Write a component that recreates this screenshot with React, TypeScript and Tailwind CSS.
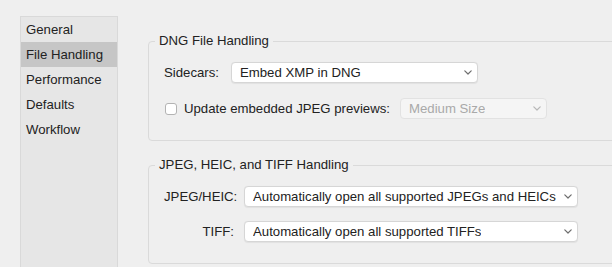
import type { ReactNode } from 'react'

const navItems = ['General', 'File Handling', 'Performance', 'Defaults', 'Workflow']

function Chevron({ disabled = false }: { disabled?: boolean }) {
  return (
    <svg width="8" height="5" viewBox="0 0 8 5" className="shrink-0">
      <path
        d="M0.8 0.8 L4 4 L7.2 0.8"
        fill="none"
        stroke={disabled ? '#b8b8b8' : '#6e6e6e'}
        strokeWidth="1.2"
        strokeLinecap="round"
        strokeLinejoin="round"
      />
    </svg>
  )
}

function Select({ value, width, disabled = false }: { value: string; width: string; disabled?: boolean }) {
  return (
    <div
      className={`flex h-[21px] shrink-0 items-center justify-between rounded-[4px] border pl-[8px] pr-[5px] ${width} ${
        disabled
          ? 'border-[#e2e2e2] bg-[#f5f5f5] text-[#a9a9a9]'
          : 'border-[#d6d6d6] bg-white text-[#222] shadow-[0_0.5px_1px_rgba(0,0,0,0.06)]'
      }`}
    >
      <span className="truncate">{value}</span>
      <Chevron disabled={disabled} />
    </div>
  )
}

function Group({ title, children }: { title: string; children: ReactNode }) {
  return (
    <div className="relative w-[480px] rounded-[4px] border border-[#dadada] pt-[20px] pb-[21px] pl-[15px]">
      <span className="absolute -top-[9px] left-[6px] bg-[#efefef] px-[4px] leading-4 text-[#222]">{title}</span>
      {children}
    </div>
  )
}

export default function App() {
  return (
    <div
      className="flex h-[267px] w-[612px] overflow-hidden bg-[#efefef] text-[13.2px] leading-4 text-[#222]"
      style={{ fontFamily: '"Liberation Sans", Arial, sans-serif' }}
    >
      <nav className="mt-[16px] ml-[20px] h-[260px] w-[98px] shrink-0 border border-[#d9d9d9] bg-[#e6e6e6]">
        {navItems.map((item) => (
          <div
            key={item}
            className={`flex h-[25px] items-center pl-[5px] ${item === 'File Handling' ? 'bg-[#c6c6c6]' : ''}`}
          >
            {item}
          </div>
        ))}
      </nav>

      <main className="ml-[30px] flex flex-col gap-[24px] pt-[41px]">
        <Group title="DNG File Handling">
          <div className="flex items-center gap-[11px]">
            <span className="w-[56px] shrink-0">Sidecars:</span>
            <Select value="Embed XMP in DNG" width="w-[247px]" />
          </div>
          <div className="mt-[15px] flex items-center">
            <span className="ml-[1px] h-[12px] w-[12px] shrink-0 rounded-[3px] border border-[#b3b3b3] bg-white" />
            <span className="ml-[7px] w-[209px] shrink-0 whitespace-nowrap">Update embedded JPEG previews:</span>
            <div className="ml-[7px]">
              <Select value="Medium Size" width="w-[147px]" disabled />
            </div>
          </div>
        </Group>

        <Group title="JPEG, HEIC, and TIFF Handling">
          <div className="grid grid-cols-[70px_334px] items-center gap-x-[10px] gap-y-[14px]">
            <span className="text-right">JPEG/HEIC:</span>
            <Select value="Automatically open all supported JPEGs and HEICs" width="w-[334px]" />
            <span className="text-right">TIFF:</span>
            <Select value="Automatically open all supported TIFFs" width="w-[334px]" />
          </div>
        </Group>
      </main>
    </div>
  )
}
